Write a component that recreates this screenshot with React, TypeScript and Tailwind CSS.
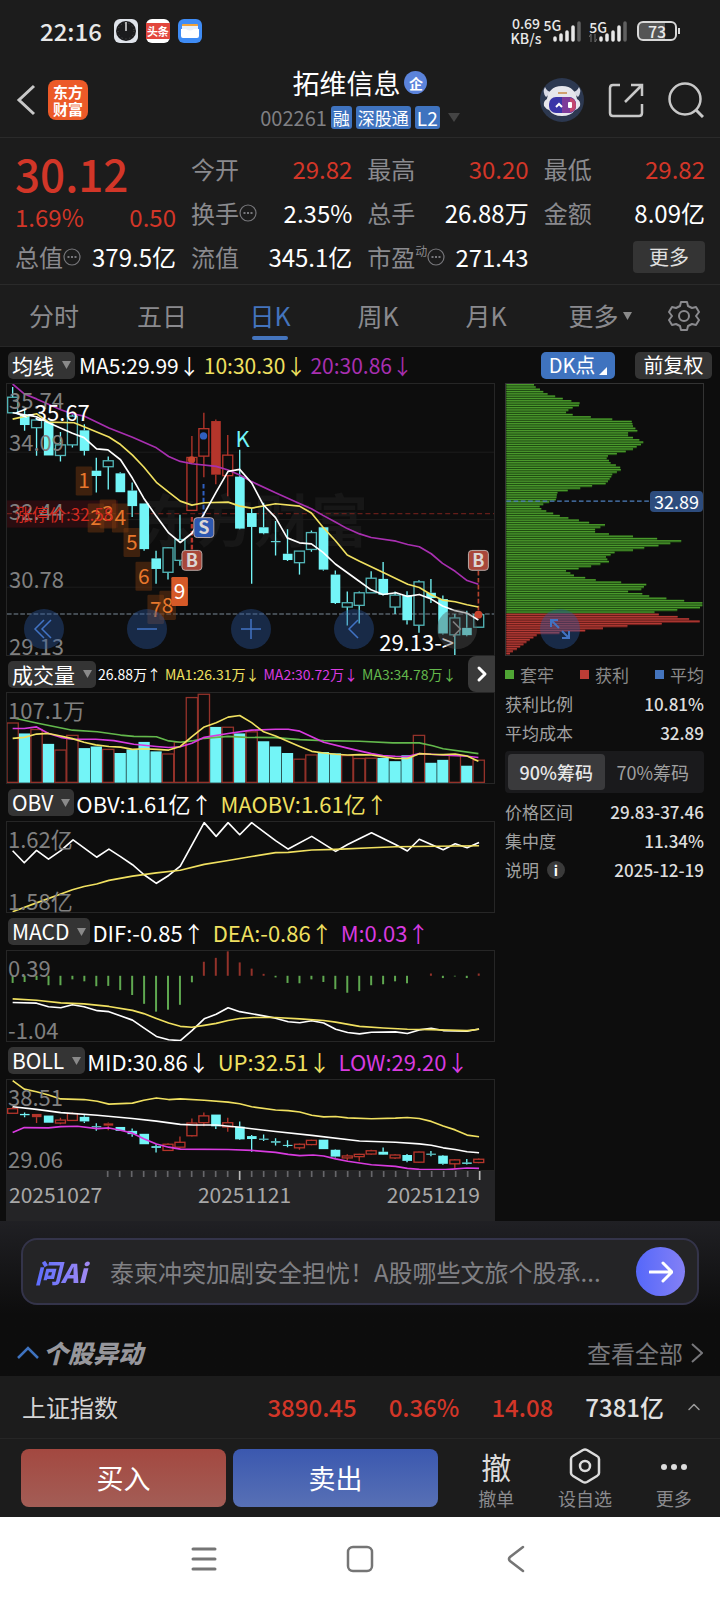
import type { ReactNode } from "react";
import { ChevronRight, ChevronUp, Search } from "lucide-react";

// [kind, bodyTop, bodyBottom, high, low]
// c: solid cyan, h: hollow cyan, r: hollow red, s: solid red
type Candle = [string, number, number, number, number];
type Bar = [string, number];

const CYAN = "#73f5f7";
const TEAL = "#52b4b6";
const RED = "#b5352b";
const YELLOW = "#f0e060";
const MAGENTA = "#a82fb0";
const PINK = "#d93be0";
const GREEN = "#63b84c";

const STEP = 36;
const xAt = (i: number) => 35 + STEP * i;

const mainCandles: Candle[] = [
  ["h", 153, 200, 122, 200],
  ["c", 205, 237, 182, 254],
  ["h", 222, 245, 215, 330],
  ["c", 227, 329, 227, 329],
  ["h", 297, 329, 258, 347],
  ["h", 210, 297, 205, 305],
  ["c", 253, 315, 235, 329],
  ["c", 375, 391, 336, 441],
  ["h", 345, 363, 332, 432],
  ["c", 383, 440, 380, 440],
  ["c", 435, 482, 411, 515],
  ["c", 474, 612, 474, 617],
  ["c", 640, 672, 617, 717],
  ["h", 608, 682, 606, 704],
  ["h", 583, 646, 508, 662],
  ["r", 335, 495, 270, 497],
  ["r", 248, 331, 200, 395],
  ["s", 225, 387, 220, 416],
  ["r", 328, 390, 267, 452],
  ["c", 393, 550, 312, 552],
  ["c", 503, 545, 490, 717],
  ["c", 546, 564, 472, 567],
  ["c", 588, 591, 527, 631],
  ["c", 626, 645, 552, 648],
  ["h", 618, 653, 618, 689],
  ["h", 562, 613, 556, 620],
  ["c", 546, 674, 546, 677],
  ["c", 689, 775, 677, 778],
  ["h", 774, 787, 740, 843],
  ["h", 744, 782, 740, 837],
  ["h", 700, 744, 679, 744],
  ["c", 702, 750, 651, 752],
  ["h", 751, 787, 740, 808],
  ["c", 751, 827, 739, 840],
  ["h", 711, 842, 706, 865],
  ["c", 744, 760, 702, 775],
  ["c", 763, 867, 752, 870],
  ["h", 820, 871, 808, 933],
  ["c", 850, 872, 798, 875],
  ["h", 810, 848, 810, 848],
];

const bollCandles: Candle[] = [
  ["r", 576, 590, 570, 590],
  ["c", 592, 596, 588, 602],
  ["s", 592, 602, 592, 620],
  ["c", 597, 619, 597, 619],
  ["r", 611, 620, 604, 624],
  ["r", 591, 612, 588, 614],
  ["c", 601, 615, 596, 620],
  ["c", 630, 633, 621, 644],
  ["s", 621, 628, 618, 642],
  ["c", 632, 644, 632, 644],
  ["c", 644, 654, 637, 662],
  ["c", 653, 685, 653, 685],
  ["c", 691, 696, 685, 710],
  ["r", 685, 704, 682, 706],
  ["r", 679, 694, 661, 697],
  ["r", 620, 659, 606, 661],
  ["r", 598, 619, 588, 630],
  ["c", 594, 630, 594, 638],
  ["r", 619, 632, 604, 647],
  ["c", 631, 670, 615, 672],
  ["c", 660, 669, 657, 708],
  ["c", 668, 671, 655, 675],
  ["c", 676, 680, 667, 689],
  ["c", 687, 690, 673, 694],
  ["r", 685, 696, 683, 702],
  ["r", 673, 686, 671, 688],
  ["c", 671, 700, 671, 700],
  ["c", 702, 723, 700, 726],
  ["r", 721, 727, 716, 735],
  ["r", 716, 723, 714, 737],
  ["r", 705, 715, 702, 717],
  ["c", 708, 717, 695, 718],
  ["r", 718, 727, 716, 730],
  ["c", 718, 736, 715, 740],
  ["r", 709, 740, 707, 742],
  ["c", 714, 717, 706, 722],
  ["c", 720, 745, 718, 748],
  ["r", 733, 745, 731, 760],
  ["c", 741, 745, 730, 747],
  ["r", 731, 741, 729, 743],
];

const volumeBars: Bar[] = [
  ["r", 203], ["c", 235], ["r", 223], ["c", 267], ["r", 286], ["r", 241], ["c", 280], ["c", 275],
  ["r", 284], ["c", 295], ["c", 284], ["c", 261], ["c", 290], ["r", 298], ["r", 262], ["r", 125],
  ["r", 115], ["c", 215], ["r", 216], ["c", 235], ["r", 230], ["c", 259], ["c", 275], ["c", 295],
  ["r", 314], ["r", 301], ["c", 292], ["c", 296], ["r", 303], ["r", 312], ["r", 311], ["c", 310],
  ["c", 320], ["c", 302], ["r", 241], ["c", 325], ["c", 316], ["r", 303], ["c", 334], ["r", 317],
];

const macdBars = [
  200, 197, 191, 207, 207, 189, 195, 210, 209, 222, 237, 264, 288, 282, 267, 198, 135, 123, 103, 137,
  156, 172, 183, 200, 201, 189, 197, 219, 230, 225, 207, 204, 195, 201, 178, 171, 185, 180, 185, 171,
];

const chips = [
  130, 135, 148, 158, 171, 194, 217, 243, 268, 266, 247, 234, 227, 247, 302, 367, 426, 428, 430, 437,
  443, 415, 415, 430, 449, 461, 454, 441, 430, 408, 381, 354, 350, 357, 362, 378, 391, 393, 381, 367,
  364, 359, 354, 347, 306, 270, 232, 201, 199, 198, 196, 176, 158, 147, 152, 167, 188, 208, 234, 266,
  297, 345, 331, 315, 315, 357, 430, 503, 576, 543, 507, 464, 430, 374, 362, 348, 352, 357, 331, 303,
  265, 227, 240, 251, 285, 317, 394, 470, 463, 455, 415, 458, 479, 531, 585, 640, 640, 633, 564, 495,
  508, 565, 600, 632, 517, 413, 339, 285, 207, 138, 128, 117, 107, 98, 88, 78, 66, 57,
];
const PROFIT_FROM = 100;

// nine-turn counter marks: [label, x, y]
const turns: [string, number, number][] = [
  ["1", 250, 406],
  ["2", 286, 518],
  ["3", 322, 506],
  ["4", 359, 518],
  ["5", 394, 592],
  ["6", 430, 694],
  ["7", 466, 794],
  ["8", 502, 782],
];

const quotes = [
  { label: "今开", value: "29.82", up: true },
  { label: "最高", value: "30.20", up: true },
  { label: "最低", value: "29.82", up: true },
  { label: "换手", value: "2.35%", hint: true },
  { label: "总手", value: "26.88万" },
  { label: "金额", value: "8.09亿" },
];

function Line({ points, color }: { points: string; color: string }) {
  return <polyline points={points} fill="none" stroke={color} strokeWidth="5" strokeLinejoin="round" />;
}

function Candles({ data }: { data: Candle[] }) {
  return (
    <>
      {data.map(([kind, top, bottom, high, low], i) => {
        const x = xAt(i);
        const color = kind === "r" || kind === "s" ? RED : CYAN;
        const solid = kind === "c" || kind === "s";
        return (
          <g key={i} stroke={color} strokeWidth="4">
            <path d={`M${x} ${high}V${top}M${x} ${bottom}V${low}`} />
            {solid ? (
              <rect x={x - 14} y={top} width="29" height={bottom - top} fill={color} stroke="none" />
            ) : (
              <rect
                x={x - 15}
                y={top}
                width="30"
                height={bottom - top}
                fill="none"
                stroke={kind === "h" ? TEAL : RED}
              />
            )}
          </g>
        );
      })}
    </>
  );
}

function Pane({
  viewBox,
  labels,
  children,
}: {
  viewBox: string;
  labels: [string, string];
  children: ReactNode;
}) {
  return (
    <div className="relative h-[92px] border border-[#262626]">
      <svg className="absolute inset-0 h-full w-full" viewBox={viewBox} preserveAspectRatio="none">
        {children}
      </svg>
      <div className="absolute inset-0 flex flex-col justify-between pt-1 pl-px text-[22px] leading-6 text-[#808080]">
        <span>{labels[0]}</span>
        <span>{labels[1]}</span>
      </div>
    </div>
  );
}

function Picker({ children }: { children: ReactNode }) {
  return (
    <button
      type="button"
      className="flex h-[27px] shrink-0 items-center gap-2 rounded-[5px] bg-[#343434] px-1 text-[21px] leading-none text-white"
    >
      {children}
      <Caret />
    </button>
  );
}

function Caret() {
  return (
    <svg className="h-2 w-[9px]" viewBox="0 0 9 8">
      <path d="M0 0H9L4.500 8Z" fill="#8a8a8a" />
    </svg>
  );
}

function PaneHeader({ name, children }: { name: string; children: ReactNode }) {
  return (
    <div className="flex h-[37px] items-center pl-0.5 text-[22px] leading-none whitespace-nowrap text-white">
      <Picker>{name}</Picker>
      <div className="flex gap-2 pl-0.5">{children}</div>
    </div>
  );
}

function Hint() {
  return (
    <svg className="h-[18px] w-[18px] shrink-0" viewBox="0 0 18 18" fill="none" stroke="#77777b">
      <circle cx="9" cy="9" r="8" strokeWidth="1.200" />
      <path d="M4.500 9h2M8 9h2M11.500 9h2" strokeWidth="2" />
    </svg>
  );
}

function RoundButton({ label, children }: { label: string; children: ReactNode }) {
  return (
    <button
      type="button"
      aria-label={label}
      className="flex h-10 w-10 items-center justify-center rounded-full bg-[#2b57a0]/40"
    >
      <svg className="h-10 w-10" viewBox="0 0 40 40" fill="none" stroke="#4173c4" strokeWidth="1.500">
        {children}
      </svg>
    </button>
  );
}

function Signal() {
  return (
    <svg className="-ml-2 h-[22px] w-7" viewBox="0 0 28 22">
      <path
        d="M2 20v-2M8 20v-5M14 20v-8M20 20v-13"
        stroke="#e8e8e8"
        strokeWidth="3.500"
        strokeLinecap="round"
      />
      <path d="M26 20V3" stroke="#606060" strokeWidth="3.500" strokeLinecap="round" />
    </svg>
  );
}

function StatusBar() {
  return (
    <div className="flex h-[62px] items-center justify-between pr-10 pl-10 text-[#e8e8e8]">
      <div className="flex items-center gap-2">
        <span className="mr-1 text-2xl font-medium">22:16</span>
        <svg className="h-6 w-6" viewBox="0 0 24 24">
          <rect width="24" height="24" rx="6" fill="#dfe3ea" />
          <circle cx="12" cy="12" r="10" fill="#1b1b1d" />
          <circle cx="12" cy="12" r="8" fill="none" stroke="#555" strokeDasharray="1 3" />
          <path d="M12 3v9" stroke="#ddd" strokeWidth="1.500" />
        </svg>
        <span className="flex h-6 w-6 items-center rounded-md bg-white">
          <span className="w-full bg-[#e2463d] text-center text-[11px] leading-4 font-bold text-white">头条</span>
        </span>
        <svg className="h-6 w-6" viewBox="0 0 24 24">
          <rect width="24" height="24" rx="6" fill="#3f8cf5" />
          <rect x="4" y="5" width="16" height="6" rx="1" fill="#f2a33a" />
          <rect x="4" y="7" width="16" height="6" fill="#e8f0fa" />
          <path d="M3 10h5q4 3 8 0h5v7q0 2-2 2H5q-2 0-2-2z" fill="#fff" />
        </svg>
      </div>
      <div className="flex items-center">
        <div className="mr-0.5 text-center text-sm leading-[15px] font-medium">
          0.69
          <br />
          KB/s
        </div>
        <div className="flex items-center">
          <span className="mb-3 text-sm leading-none font-medium">5G</span>
          <Signal />
        </div>
        <div className="ml-2 flex items-center">
          <span className="flex flex-col items-start text-sm leading-none font-medium">
            5G
            <svg className="h-2 w-2" viewBox="0 0 8 8" stroke="#707070" fill="none">
              <path d="M2 8V0L0 3M6 0V8L8 5" />
            </svg>
          </span>
          <Signal />
        </div>
        <div className="ml-2.5 flex items-center gap-px">
          <div className="flex h-5 w-10 items-center justify-center rounded-md border-2 border-[#d8d8d8] bg-linear-to-r from-[#555] from-73% to-[#1c1c1c] to-73% text-base leading-none font-medium">
            73
          </div>
          <div className="h-1.5 w-0.5 bg-[#d8d8d8]" />
        </div>
      </div>
    </div>
  );
}

function Header() {
  return (
    <header className="grid h-[76px] grid-cols-[1fr_auto_1fr] items-center border-b border-[#2a2a2a] pr-4 pl-4">
      <div className="flex items-center gap-3">
        <button type="button" aria-label="返回">
          <svg className="h-8 w-5" viewBox="0 0 20 32" fill="none" stroke="#c8c8c8" strokeWidth="3">
            <path d="M18 2L3 16L18 30" />
          </svg>
        </button>
        <a
          href="#home"
          className="flex h-10 w-10 flex-col items-center justify-center rounded-lg bg-[#ec5a28] text-[15px] leading-[17px] font-bold text-white"
        >
          <span>东方</span>
          <span>财富</span>
        </a>
      </div>
      <div className="flex flex-col items-center">
        <h1 className="flex items-center gap-1 text-[27px] leading-9 text-white">
          拓维信息
          <span className="flex h-[23px] w-[23px] items-center justify-center rounded-full bg-[#5b83da] text-sm leading-none font-bold">
            企
          </span>
        </h1>
        <div className="flex items-center gap-1 text-xl leading-[34px] text-[#808084]">
          002261
          <span className="rounded-[3px] bg-[#3f73bf] px-0.5 text-[17px] leading-[23px] text-white">融</span>
          <span className="rounded-[3px] bg-[#3f73bf] px-0.5 text-[17px] leading-[23px] text-white">深股通</span>
          <span className="rounded-[3px] bg-[#3f73bf] px-0.5 text-[19px] leading-[23px] text-white">L2</span>
          <svg className="ml-1 h-[9px] w-3" viewBox="0 0 12 9">
            <path d="M0 0H12L6 9Z" fill="#444" />
          </svg>
        </div>
      </div>
      <div className="flex items-center justify-end gap-6">
        <button type="button" aria-label="智能助手">
          <svg className="h-11 w-11" viewBox="0 0 44 44">
            <circle cx="22" cy="22" r="22" fill="#2c3850" />
            <path d="M6 19Q2 14 5 9Q7 14 12 14ZM38 19Q42 14 39 9Q37 14 32 14Z" fill="#d9dbe6" />
            <path d="M22 8C12 8 8 14 7 21Q3 23 4 28Q6 31 9 32Q13 38 22 38T35 32Q38 31 40 28Q41 23 37 21C36 14 32 8 22 8z" fill="#e6e6ec" />
            <rect x="9" y="19" width="27" height="16" rx="7" fill="#3a35a8" />
            <path d="M22 19h7q7 1 7 8t-7 8h-7z" fill="#7d3a9a" />
            <path d="M30 20q6 1 6 7t-6 7z" fill="#c2486e" />
            <path d="M16 29l3-3l3 3" stroke="#fff" strokeWidth="2" fill="none" />
            <rect x="28" y="24" width="4" height="6" rx="1" fill="#fff" />
            <path d="M18 15h9" stroke="#d0a070" strokeWidth="2" />
          </svg>
        </button>
        <button type="button" aria-label="分享">
          <svg className="h-9 w-9" viewBox="0 0 36 36" fill="none" stroke="#c8c8c8" strokeWidth="2.500">
            <path d="M12 3H5Q2 3 2 6V31Q2 34 5 34H31Q34 34 34 31V22" />
            <path d="M23 3H34V14M34 3L17 20" />
          </svg>
        </button>
        <button type="button" aria-label="搜索">
          <svg className="h-9 w-9" viewBox="0 0 36 36" fill="none" stroke="#c8c8c8" strokeWidth="2.500">
            <circle cx="17" cy="17" r="15.500" />
            <path d="M28 28L35 35" strokeWidth="3" />
          </svg>
        </button>
      </div>
    </header>
  );
}

function Quote() {
  return (
    <section className="grid h-[147px] grid-cols-[161fr_514fr] content-start gap-x-[15px] border-b border-[#2a2a2a] px-[15px] pt-[9px] text-2xl leading-[44px] whitespace-nowrap text-[#8a8a8e]">
      <div className="text-[#d23628]">
        <div className="text-[44px] leading-[52px] font-medium">30.12</div>
        <div className="flex justify-between leading-9">
          <span>1.69%</span>
          <span>0.50</span>
        </div>
      </div>
      <div className="grid grid-cols-3 gap-x-[15px]">
        {quotes.map(({ label, value, up, hint }) => (
          <div key={label} className="flex items-center justify-between">
            <span className="flex items-center">
              {label}
              {hint && <Hint />}
            </span>
            <span className={up ? "text-[#d23628]" : "text-white"}>{value}</span>
          </div>
        ))}
      </div>
      <div className="flex items-center justify-between">
        <span className="flex items-center">
          总值
          <Hint />
        </span>
        <span className="text-white">379.5亿</span>
      </div>
      <div className="grid grid-cols-3 gap-x-[15px]">
        <div className="flex items-center justify-between">
          流值<span className="text-white">345.1亿</span>
        </div>
        <div className="flex items-center justify-between">
          <span className="flex items-center">
            市盈
            <sup className="text-xs leading-none">动</sup>
            <Hint />
          </span>
          <span className="text-white">271.43</span>
        </div>
        <div className="flex items-center justify-end">
          <button type="button" className="h-8 w-[72px] rounded bg-[#343434] text-xl leading-none text-[#e0e0e0]">
            更多
          </button>
        </div>
      </div>
    </section>
  );
}

function Tabs() {
  return (
    <nav className="flex h-[62px] items-center border-b border-[#262626] text-[25px] text-[#8a8a8e]">
      {["分时", "五日", "日K", "周K", "月K"].map((tab) => (
        <button
          key={tab}
          type="button"
          className={
            tab === "日K"
              ? "relative flex h-full w-[15%] items-center justify-center text-[#4474bd]"
              : "flex h-full w-[15%] items-center justify-center"
          }
        >
          {tab}
          {tab === "日K" && <span className="absolute bottom-1.5 h-1 w-9 rounded-full bg-[#4474bd]" />}
        </button>
      ))}
      <button type="button" className="flex flex-1 items-center justify-center gap-1">
        更多
        <Caret />
      </button>
      <button type="button" aria-label="设置" className="mr-5 ml-2">
        <svg className="h-8 w-8" viewBox="0 0 32 32" fill="none" stroke="#8a8a8e" strokeWidth="2" strokeLinejoin="round">
          <path d="M13 2H19L20 6L24 8L28 7L31 12L28 16L31 20L28 25L24 24L20 26L19 30H13L12 26L8 24L4 25L1 20L4 16L1 12L4 7L8 8L12 6Z" />
          <circle cx="16" cy="16" r="5" />
        </svg>
      </button>
    </nav>
  );
}

function MainChart() {
  return (
    <div className="relative h-[273px] border border-[#262626]">
      <svg className="absolute inset-0 h-full w-full" viewBox="18 113 1467 819" preserveAspectRatio="none">
        <text x="418" y="590" fontSize="172" fontWeight="700" fill="#171717">
          东方财富
        </text>
        <path d="M18 319H1485M18 523H1485M18 727H1485" stroke="#1d1d1d" strokeWidth="3" />
        <rect x="18" y="465" width="334" height="82" fill="#2a0d10" />
        <path d="M18 505H1485" stroke="#7c231e" strokeWidth="3" strokeDasharray="15 9" />
        <path d="M18 808H1485" stroke="#55606a" strokeWidth="4" strokeDasharray="14 6" />
        {turns.map(([n, x, y]) => (
          <g key={n}>
            <rect x={x - 25} y={y - 44} width="50" height="88" rx="4" fill="#7a3a10" opacity="0.45" />
            <text x={x} y={y + 22} fontSize="63" textAnchor="middle" fill="#e8782c">
              {n}
            </text>
          </g>
        ))}
        <Candles data={mainCandles} />
        <rect x="513" y="696" width="50" height="88" rx="4" fill="#d65a28" />
        <text x="538" y="762" fontSize="63" textAnchor="middle" fill="#fff">
          9
        </text>
        <path d="M575 515V615" stroke="#b5352b" strokeWidth="7" strokeDasharray="14 7" />
        <path d="M610 415V520" stroke="#2f5fc0" strokeWidth="6" strokeDasharray="14 7" />
        <path d="M1438 678V800" stroke="#b5442f" strokeWidth="5" strokeDasharray="14 7" />
        <circle cx="574" cy="342" r="11" fill="#c8452f" />
        <circle cx="610" cy="270" r="11" fill="#2f5fc0" />
        <circle cx="1438" cy="810" r="12" fill="#c8452f" />
        <Line
          color={MAGENTA}
          points="35,113 70,143 107,158 180,191 215,203 250,210 325,246 396,274 468,306 505,332 540,347 575,354 648,362 684,373 719,388 755,408 827,442 899,474 935,490 970,510 1007,530 1043,550 1080,566 1115,577 1190,588 1225,598 1260,605 1296,626 1330,655 1368,679 1404,707 1438,718"
        />
        <Line
          color={YELLOW}
          points="35,219 107,203 143,228 220,230 250,242 325,273 360,296 396,328 430,364 468,410 505,440 540,467 575,479 612,472 684,470 719,482 755,488 827,475 899,482 935,503 970,546 1007,586 1043,630 1080,649 1150,682 1225,718 1260,728 1296,750 1330,766 1368,771 1404,780 1438,787"
        />
        <Line
          color="#fff"
          points="35,200 107,212 143,230 215,262 250,275 288,309 322,312 360,342 396,398 430,458 468,513 505,563 540,592 575,564 612,505 648,440 684,377 719,371 755,412 790,478 827,517 862,578 899,593 935,596 970,622 1007,657 1080,710 1115,735 1150,749 1190,744 1225,755 1260,749 1296,763 1330,784 1368,798 1404,806 1438,826"
        />
        {[
          ["B", 575, 646, "#a8473a"],
          ["S", 611, 547, "#2e58b0"],
          ["B", 1438, 646, "#a8473a"],
        ].map(([mark, x, y, fill]) => (
          <g key={`${mark}${x}`}>
            <rect x={+x - 30} y={+y - 30} width="60" height="60" rx="10" fill={`${fill}`} stroke="#b9a9a6" strokeWidth="3" />
            <text x={x} y={+y + 19} fontSize="54" fontWeight="700" textAnchor="middle" fill="#dcd6d4">
              {mark}
            </text>
          </g>
        ))}
        <text x="728" y="304" fontSize="66" textAnchor="middle" fill={CYAN}>
          K
        </text>
      </svg>
      <div className="pointer-events-none absolute inset-0 text-[22px] leading-none text-[#808080]">
        <span className="absolute top-1 left-0.5">35.74</span>
        <span className="absolute top-[46px] left-0.5">34.09</span>
        <span className="absolute top-[115px] left-0.5">32.44</span>
        <span className="absolute top-[121px] left-2 text-[17px] text-[#d22a20]">涨停价:32.58</span>
        <span className="absolute top-[183px] left-0.5">30.78</span>
        <span className="absolute top-[250px] left-0.5">29.13</span>
        <span className="absolute top-4 left-2 text-white">&lt;-35.67</span>
        <span className="absolute top-[246px] right-10 text-white">29.13-&gt;</span>
      </div>
      <div className="absolute inset-x-[17px] top-[225px] flex justify-between">
        <RoundButton label="最早">
          <path d="M20 11L11 20L20 29M27 11L18 20L27 29" />
        </RoundButton>
        <RoundButton label="缩小">
          <path d="M10 20H30" />
        </RoundButton>
        <RoundButton label="放大">
          <path d="M10 20H30M20 10V30" />
        </RoundButton>
        <RoundButton label="向左">
          <path d="M24 11L15 20L24 29" />
        </RoundButton>
        <button
          type="button"
          aria-label="向右"
          className="flex h-10 w-10 items-center justify-center rounded-full bg-[#505050]/40 text-[#808080]"
        >
          <ChevronRight className="h-7 w-7" strokeWidth={1.5} />
        </button>
      </div>
    </div>
  );
}

function Charts() {
  return (
    <div>
      <MainChart />

      <div className="relative flex h-9 items-center pl-0.5 whitespace-nowrap text-white">
        <Picker>成交量</Picker>
        <div className="flex gap-1 pl-0.5 text-sm leading-none">
          <span>26.88万↑</span>
          <span className="text-[#f0e060]">MA1:26.31万↓</span>
          <span className="text-[#d93be0]">MA2:30.72万↓</span>
          <span className="text-[#63b84c]">MA3:34.78万↓</span>
        </div>
        <button
          type="button"
          aria-label="更多指标"
          className="absolute top-0 right-0 flex h-9 w-[27px] items-center justify-center rounded-l-lg bg-[#3a3a3a] text-white"
        >
          <ChevronRight className="h-6 w-6" strokeWidth={3} />
        </button>
      </div>
      <Pane viewBox="18 111 1467 276" labels={["107.1万", ""]}>
        {volumeBars.map(([kind, top], i) =>
          kind === "c" ? (
            <rect key={i} x={xAt(i) - 17} y={top} width="34" height={386 - top} fill={CYAN} />
          ) : (
            <rect
              key={i}
              x={xAt(i) - 17}
              y={top}
              width="34"
              height={385 - top}
              fill="none"
              stroke="#93322a"
              strokeWidth="4"
            />
          ),
        )}
        <Line
          color={GREEN}
          points="35,187 107,203 215,225 290,230 360,240 400,244 468,245 505,258 540,262 575,258 612,250 684,244 740,247 827,248 900,254 972,257 1080,259 1180,264 1260,264 1300,273 1332,282 1438,297"
        />
        <Line
          color={PINK}
          points="35,220 70,220 107,215 143,235 180,247 215,253 285,253 340,257 400,268 468,275 505,278 540,276 575,265 612,247 684,235 755,225 827,222 865,222 900,228 936,245 972,262 1044,280 1116,297 1150,303 1188,305 1224,306 1260,297 1332,301 1404,305 1438,309"
        />
        <Line
          color={YELLOW}
          points="35,250 70,247 107,237 143,235 180,243 215,251 250,262 285,270 325,275 360,277 396,284 430,282 468,284 505,286 540,275 575,245 612,215 648,202 684,185 719,180 755,202 791,230 827,243 865,260 900,275 936,290 972,295 1008,299 1044,301 1080,300 1116,301 1150,306 1188,312 1224,312 1260,297 1296,299 1332,300 1368,298 1404,304 1438,320"
        />
      </Pane>

      <PaneHeader name="OBV">
        <span>OBV:1.61亿↑</span>
        <span className="text-[#f0e060]">MAOBV:1.61亿↑</span>
      </PaneHeader>
      <Pane viewBox="18 497 1467 276" labels={["1.62亿", "1.58亿"]}>
        <Line
          color="#fff"
          points="35,585 70,622 107,584 143,611 180,585 217,552 288,605 325,580 360,603 396,628 430,658 468,685 505,661 540,632 612,499 648,541 684,499 719,536 755,499 827,554 865,580 936,541 1008,587 1044,566 1116,530 1188,566 1224,586 1260,550 1332,582 1368,564 1404,576 1440,560"
        />
        <Line
          color={YELLOW}
          points="35,772 107,745 215,705 250,695 288,687 325,676 396,663 468,653 540,645 612,627 684,615 755,603 827,591 865,590 936,583 1008,581 1116,576 1188,573 1440,570"
        />
      </Pane>

      <PaneHeader name="MACD">
        <span>DIF:-0.85↑</span>
        <span className="text-[#f0e060]">DEA:-0.86↑</span>
        <span className="text-[#d93be0]">M:0.03↑</span>
      </PaneHeader>
      <Pane viewBox="18 102 1467 276" labels={["0.39", "-1.04"]}>
        {macdBars.map((end, i) => (
          <path key={i} d={`M${xAt(i)} 178V${end}`} stroke={end < 178 ? "#93322a" : "#5fa850"} strokeWidth="6" />
        ))}
        <Line
          color="#fff"
          points="35,260 107,262 143,273 180,276 215,267 250,273 290,285 325,288 396,314 430,338 468,364 505,374 540,377 575,346 612,310 648,296 684,276 719,288 791,301 827,308 865,319 900,322 936,316 972,323 1008,342 1044,352 1080,356 1116,351 1188,350 1224,355 1260,344 1296,339 1332,346 1404,348 1440,341"
        />
        <Line
          color={YELLOW}
          points="35,249 107,253 180,261 250,264 325,272 396,284 430,294 468,309 505,323 540,333 575,336 612,330 648,324 684,315 719,309 760,306 827,306 900,310 972,315 1008,320 1080,333 1152,338 1224,342 1296,343 1404,346 1440,342"
        />
      </Pane>

      <PaneHeader name="BOLL">
        <span>MID:30.86↓</span>
        <span className="text-[#f0e060]">UP:32.51↓</span>
        <span className="text-[#d93be0]">LOW:29.20↓</span>
      </PaneHeader>
      <Pane viewBox="18 488 1467 276" labels={["38.51", "29.06"]}>
        <Candles data={bollCandles} />
        <Line
          color={YELLOW}
          points="35,490 70,516 107,524 143,534 180,546 250,548 290,553 325,562 396,559 430,550 468,543 505,548 540,546 612,550 684,556 719,561 755,570 827,580 865,582 900,586 936,596 972,601 1008,600 1044,604 1116,607 1188,605 1224,603 1260,606 1296,615 1332,629 1368,641 1404,657 1440,662"
        />
        <Line
          color="#fff"
          points="35,570 107,578 180,588 290,596 396,606 468,614 540,624 580,626 648,626 719,633 827,646 936,658 1080,675 1188,679 1260,684 1296,688 1332,696 1368,701 1404,708 1440,711"
        />
        <Line
          color={PINK}
          points="35,649 70,634 143,635 180,631 230,630 290,637 325,635 360,642 396,651 430,668 468,684 505,694 540,700 684,701 755,704 827,710 865,716 900,720 940,718 972,721 1008,730 1044,737 1116,748 1188,753 1224,759 1260,762 1340,763 1404,758 1440,759"
        />
      </Pane>

      <div className="h-[50px] bg-[#242426] text-[21px] text-[#a8a8a8]">
        <svg className="block h-[9px] w-full" viewBox="18 0 1467 27" preserveAspectRatio="none">
          {Array.from({ length: 32 }, (_, k) => k + 8).map((i) => (
            <path
              key={i}
              d={`M${xAt(i)} 0V${i === 19 || i === 39 ? 27 : 18}`}
              stroke={i === 19 || i === 39 ? "#b8b8b8" : "#66666a"}
              strokeWidth="5"
            />
          ))}
        </svg>
        <div className="flex justify-between pr-[15px] pl-[3px] leading-7">
          <span>20251027</span>
          <span>20251121</span>
          <span>20251219</span>
        </div>
      </div>
    </div>
  );
}

function ChipPanel() {
  return (
    <aside className="text-[17px] leading-[29px] whitespace-nowrap text-[#a0a0a0]">
      <div className="relative h-[273px] border border-[#333]">
        <svg className="absolute inset-0 h-full w-full" viewBox="45 113 597 819" preserveAspectRatio="none">
          {chips.map((end, i) => {
            const profit = i >= PROFIT_FROM;
            const y = 113 + i * 6.94;
            return (
              <g key={i}>
                <rect x="46" y={y} width={end - 46} height="7" fill={profit ? "#661d1b" : "#1f4a12"} />
                <rect x="46" y={y} width={end - 46} height="4" fill={profit ? "#b33a34" : "#4a9a2c"} />
              </g>
            );
          })}
          <path d="M46 467H480" stroke="#4f80c0" strokeWidth="4" strokeDasharray="14 8" />
        </svg>
        <span className="absolute top-[107px] right-0 rounded bg-[#2d4c7d] px-1 text-[18px] leading-[21px] text-white">
          32.89
        </span>
        <div className="absolute top-[225px] left-[34px]">
          <RoundButton label="全屏">
            <path d="M19 19L11 11M11 18V11H18M22 22L29 29M22 29H29V22" strokeWidth="2" />
          </RoundButton>
        </div>
      </div>
      <div className="mt-1 flex justify-between text-[#8a8a8a]">
        <span className="flex items-center gap-1.5">
          <i className="h-[9px] w-[9px] bg-[#4fa534]" />
          套牢
        </span>
        <span className="flex items-center gap-1.5">
          <i className="h-[9px] w-[9px] bg-[#bd3d36]" />
          获利
        </span>
        <span className="flex items-center gap-1.5">
          <i className="h-[9px] w-[9px] bg-[#4474bd]" />
          平均
        </span>
      </div>
      <dl>
        <div className="flex justify-between">
          <dt>获利比例</dt>
          <dd className="font-medium text-[#dedede]">10.81%</dd>
        </div>
        <div className="flex justify-between">
          <dt>平均成本</dt>
          <dd className="font-medium text-[#dedede]">32.89</dd>
        </div>
      </dl>
      <div className="my-1 flex h-[42px] rounded bg-[#1a1a1c] p-[3px] text-lg">
        <button type="button" className="flex-1 rounded bg-[#3a3a3c] font-medium text-[#e8e8e8]">
          90%筹码
        </button>
        <button type="button" className="flex-1">
          70%筹码
        </button>
      </div>
      <dl>
        <div className="flex justify-between">
          <dt>价格区间</dt>
          <dd className="font-medium text-[#dedede]">29.83-37.46</dd>
        </div>
        <div className="flex justify-between">
          <dt>集中度</dt>
          <dd className="font-medium text-[#dedede]">11.34%</dd>
        </div>
        <div className="flex justify-between">
          <dt className="flex items-center gap-2">
            说明
            <span className="flex h-[18px] w-[18px] items-center justify-center rounded-full bg-[#3a3a3a] text-sm font-bold text-white">
              i
            </span>
          </dt>
          <dd className="font-medium text-[#dedede]">2025-12-19</dd>
        </div>
      </dl>
    </aside>
  );
}

function AskAi() {
  return (
    <section className="bg-linear-to-b from-[#202024] to-[#0d0d0d] to-60% px-[21px] pt-[17px]">
      <form className="flex h-[67px] items-center rounded-2xl border-2 border-[#34344a] bg-[#242426] pr-3 pl-3">
        <label
          htmlFor="ask"
          className="w-[75px] bg-linear-to-r from-[#5b6cff] to-[#a98cf0] to-80% bg-clip-text text-[26px] font-black text-transparent italic"
        >
          问Ai
        </label>
        <input
          id="ask"
          className="min-w-0 flex-1 bg-transparent text-2xl outline-none placeholder:text-[#808084]"
          placeholder="泰柬冲突加剧安全担忧！A股哪些文旅个股承..."
        />
        <button
          type="button"
          aria-label="提问"
          className="ml-3 flex h-[49px] w-[49px] items-center justify-center rounded-full bg-linear-to-r from-[#5567fa] to-[#8480f5]"
        >
          <svg className="h-6 w-6" viewBox="0 0 24 24" fill="none" stroke="#fff" strokeWidth="3" strokeLinecap="round" strokeLinejoin="round">
            <path d="M1 12H23M14 3L23 12L14 21" />
          </svg>
        </button>
      </form>
      <div className="flex h-[71px] items-center justify-between pt-6">
        <h2 className="flex items-center gap-1 text-[25px] leading-none font-black text-[#97979c] italic">
          <svg className="-ml-1 h-[13px] w-[22px]" viewBox="0 0 22 13" fill="none" stroke="#3f73bf" strokeWidth="2.500">
            <path d="M1 12L11 2L21 12" />
          </svg>
          个股异动
        </h2>
        <a href="#all" className="-mr-1 flex items-center gap-2 text-2xl leading-none text-[#77777b]">
          查看全部
          <svg className="h-5 w-3" viewBox="0 0 12 20" fill="none" stroke="currentColor" strokeWidth="2">
            <path d="M1 1L11 10L1 19" />
          </svg>
        </a>
      </div>
    </section>
  );
}

function BottomBar() {
  return (
    <footer>
      <div className="flex h-[63px] items-center border-b border-[#262626] pr-4 pl-[22px] text-2xl text-[#d23628]">
        <span className="flex-1 text-[#d4d4d4]">上证指数</span>
        <span className="mr-8 font-medium">3890.45</span>
        <span className="mr-8 font-medium">0.36%</span>
        <span className="mr-8 font-medium">14.08</span>
        <span className="mr-5 font-medium text-[#e0e0e0]">7381亿</span>
        <ChevronUp className="h-5 w-5 text-[#9a9a9a]" strokeWidth={1.8} />
      </div>
      <div className="flex h-[78px] items-center pr-0.5 pl-[21px]">
        <button
          type="button"
          className="mr-[7px] h-[58px] flex-1 rounded-lg bg-linear-to-b from-[#a34840] to-[#a35d56] text-[27px] text-white"
        >
          买入
        </button>
        <button
          type="button"
          className="mr-[14px] h-[58px] flex-1 rounded-lg bg-linear-to-b from-[#3b58af] to-[#5870b5] text-[27px] text-white"
        >
          卖出
        </button>
        <div className="flex w-[266px] text-lg leading-6 text-[#8a8a8e]">
          <button type="button" className="flex flex-1 flex-col items-center">
            <span className="h-10 text-3xl leading-10 text-[#dcdcdc]">撤</span>
            撤单
          </button>
          <button type="button" className="flex flex-1 flex-col items-center">
            <svg className="my-0.5 h-9 w-9" viewBox="0 0 36 36" fill="none" stroke="#dcdcdc" strokeWidth="2.500" strokeLinejoin="round">
              <path d="M16 2Q18 1 20 2L30 8Q32 9 32 11V25Q32 27 30 28L20 34Q18 35 16 34L6 28Q4 27 4 25V11Q4 9 6 8Z" />
              <circle cx="18" cy="18" r="5" />
            </svg>
            设自选
          </button>
          <button type="button" className="flex flex-1 flex-col items-center">
            <svg className="my-0.5 h-9 w-9" viewBox="0 0 36 36" fill="#dcdcdc">
              <circle cx="8" cy="19" r="3" />
              <circle cx="18" cy="19" r="3" />
              <circle cx="28" cy="19" r="3" />
            </svg>
            更多
          </button>
        </div>
      </div>
      <div className="flex h-[83px] items-center justify-center gap-32 bg-white text-[#757575]">
        <button type="button" aria-label="最近任务">
          <svg className="h-7 w-7" viewBox="0 0 28 28" stroke="currentColor" strokeWidth="3" strokeLinecap="round">
            <path d="M3 4H25M3 14H25M3 24H25" />
          </svg>
        </button>
        <button type="button" aria-label="主屏幕">
          <svg className="h-7 w-7" viewBox="0 0 28 28" fill="none" stroke="currentColor" strokeWidth="2.500">
            <rect x="2" y="2" width="24" height="24" rx="5" />
          </svg>
        </button>
        <button type="button" aria-label="返回上一页">
          <svg className="h-7 w-7" viewBox="0 0 28 28" fill="none" stroke="currentColor" strokeWidth="2.500" strokeLinecap="round">
            <path d="M21 2L8 12Q6 14 8 16L21 26" />
          </svg>
        </button>
      </div>
    </footer>
  );
}

export default function App() {
  return (
    <div className="w-full overflow-hidden bg-[#1c1c1c] font-['Noto_Sans_CJK_SC',sans-serif]">
      <StatusBar />
      <Header />
      <Quote />
      <Tabs />
      <main className="bg-[#0d0d0d]">
        <div className="flex h-9 items-center gap-1 px-2 text-[21px] leading-none whitespace-nowrap text-white">
          <Picker>均线</Picker>
          <span>MA5:29.99↓</span>
          <span className="text-[#f0e060]">10:30.30↓</span>
          <span className="text-[#a82fb0]">20:30.86↓</span>
          <button
            type="button"
            className="ml-auto flex h-[27px] w-[74px] items-center justify-center gap-1 rounded-[5px] bg-[#3f73bf] text-xl leading-none"
          >
            DK点
            <svg className="mt-3 h-2 w-2" viewBox="0 0 8 8">
              <path d="M8 0V8H0Z" fill="#fff" />
            </svg>
          </button>
          <button type="button" className="ml-4 h-[27px] w-[77px] rounded-[5px] bg-[#343434] text-xl leading-none">
            前复权
          </button>
        </div>
        <div className="grid grid-cols-[minmax(0,489fr)_minmax(0,199fr)] gap-[10px] pr-4 pl-1.5">
          <Charts />
          <ChipPanel />
        </div>
        <AskAi />
      </main>
      <BottomBar />
    </div>
  );
}
